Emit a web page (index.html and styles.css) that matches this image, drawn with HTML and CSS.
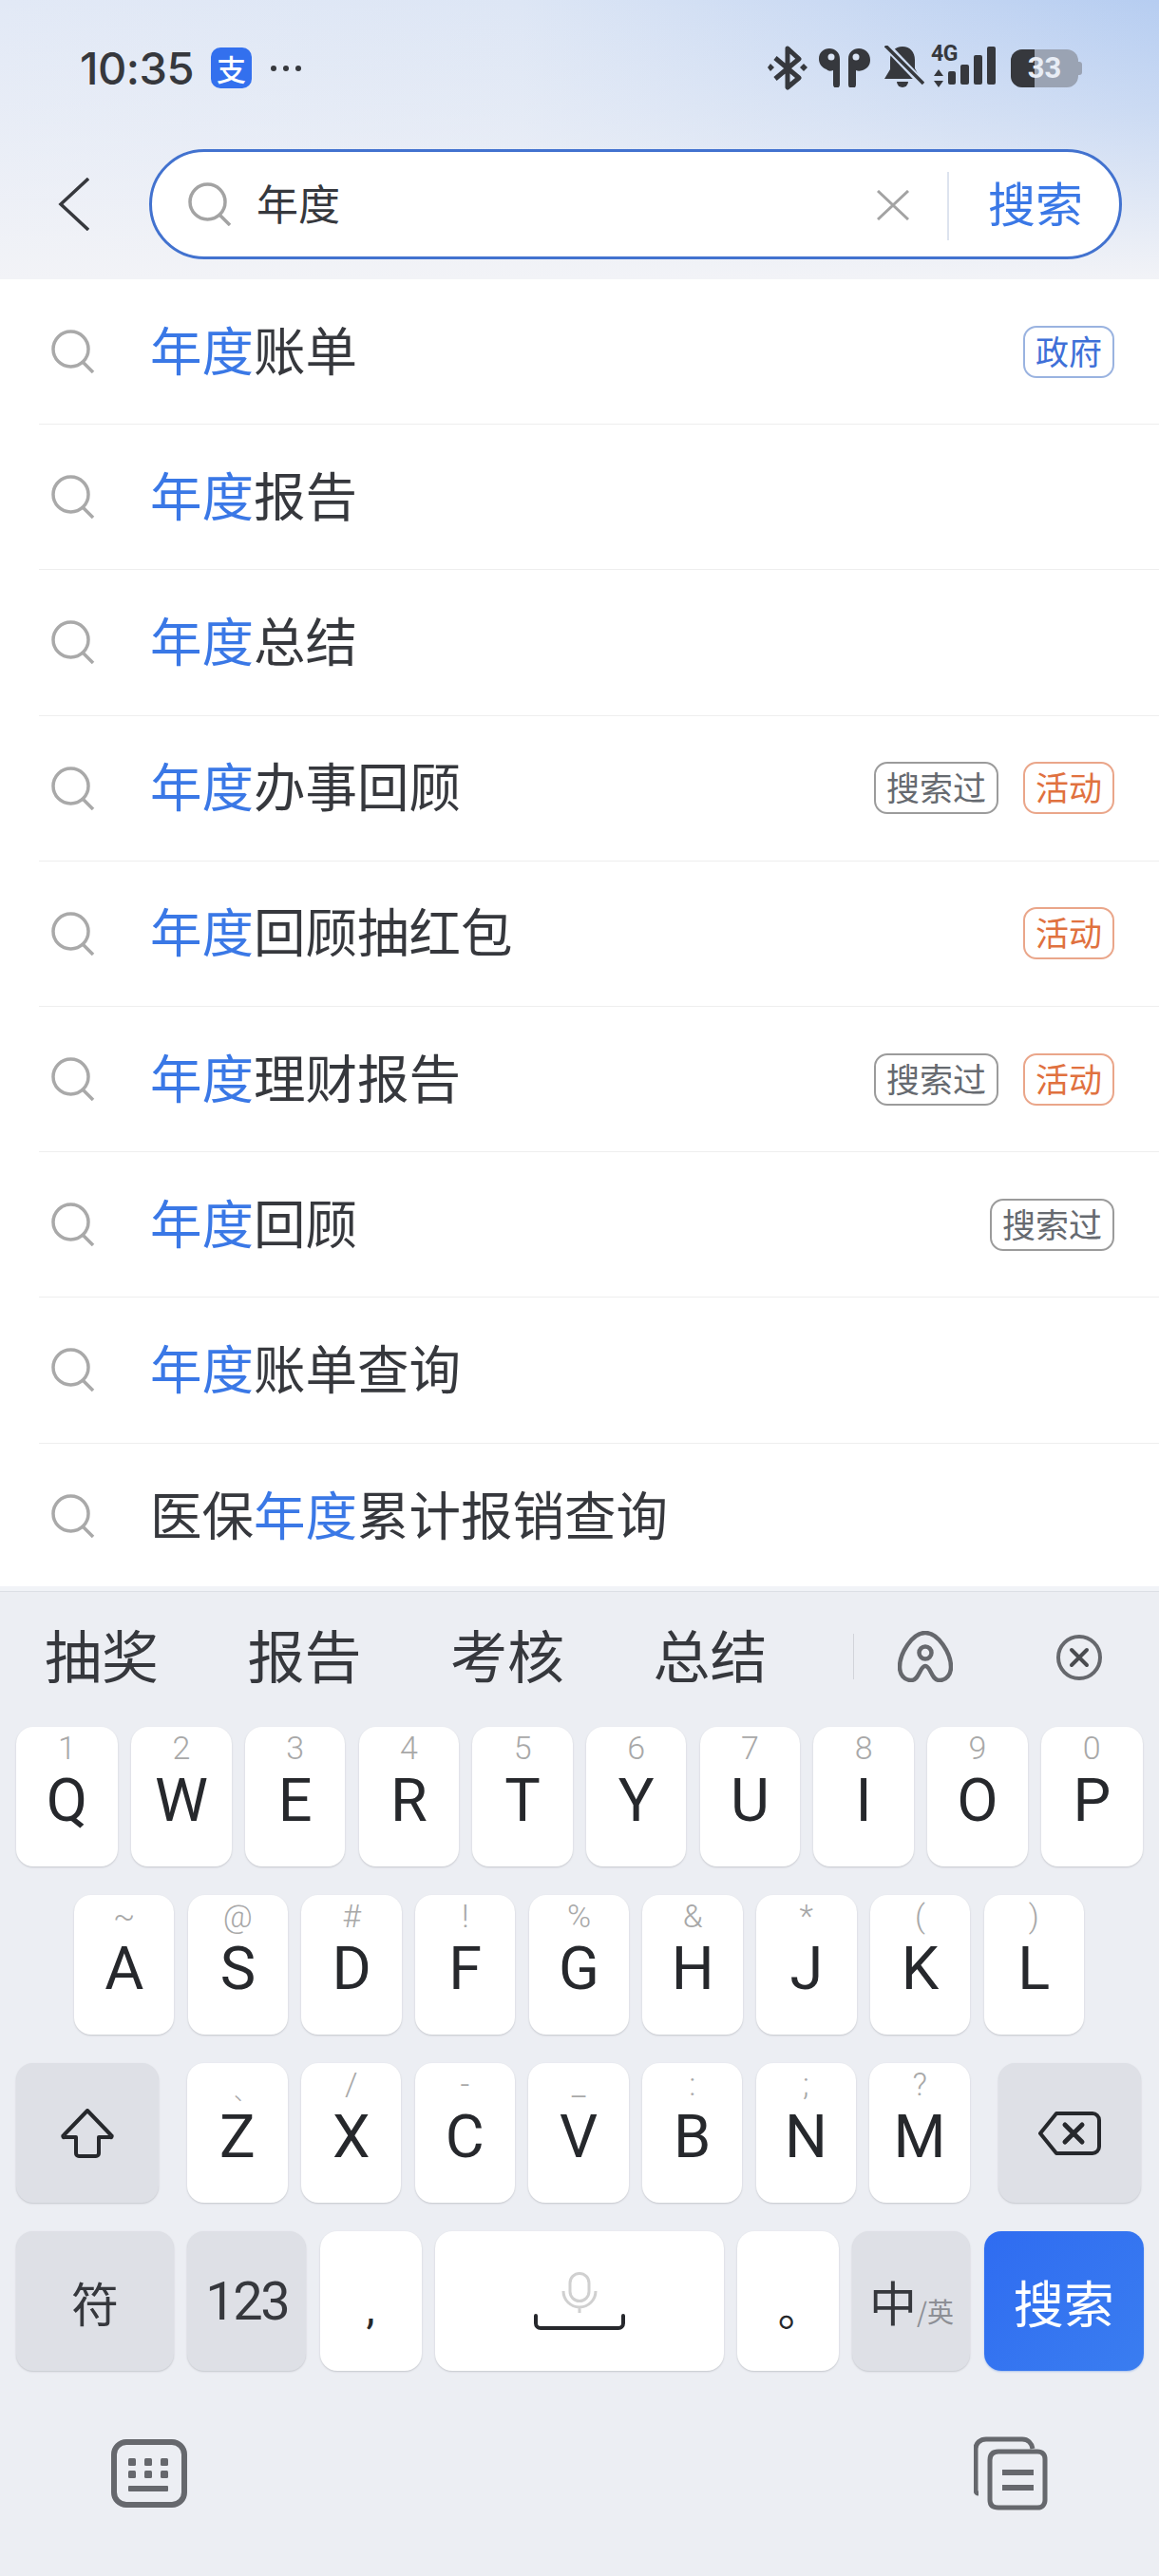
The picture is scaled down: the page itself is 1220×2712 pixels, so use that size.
FILE: index.html
```html
<!DOCTYPE html>
<html lang="zh">
<head>
<meta charset="utf-8">
<title>搜索</title>
<link rel="stylesheet" href="styles.css">
</head>
<body>
<svg class="defs" width="0" height="0" aria-hidden="true">
  <symbol id="mag" viewBox="0 0 46 46"><circle cx="20.5" cy="20.5" r="18.5" fill="none" stroke="currentColor" stroke-width="3.500"/><path d="M33 34l11 11" fill="none" stroke="currentColor" stroke-width="3.500"/></symbol>
</svg>
<div class="page">
  <header class="top">
    <div class="status">
      <div class="status-left">
        <span class="time">10:35</span>
        <span class="alipay">支</span>
        <span class="dots"><i></i><i></i><i></i></span>
      </div>
      <div class="status-right">
        <svg class="ic-bt" width="42" height="47" viewBox="0 0 42 47"><path d="M8 13l25 21-12 10V3l12 11L8 35" fill="none" stroke="#36383d" stroke-width="5" stroke-linejoin="round"/><path d="M3 19l4 4-4 4-3-4zM38 19l4 4-4 4-4-4z" fill="#36383d"/></svg>
        <svg class="ic-pods" width="54" height="41" viewBox="0 0 54 41"><g fill="#36383d"><path d="M11 0c6 0 11 4 11 11v27a3.500 3.500 0 0 1-7 0V23c-3 1-5 1-7-1C3 20 0 16 0 11 0 4 5 0 11 0z"/><path d="M42 0c7 0 12 5 12 12 0 6-3 9-8 11-3 1-5 1-7 0v15a4 4 0 0 1-8 0V11C31 4 36 0 42 0z"/></g><circle cx="13" cy="9" r="3.500" fill="#dbe5f5"/><circle cx="39" cy="9" r="3.500" fill="#dbe5f5"/></svg>
        <svg class="ic-bell" width="42" height="44" viewBox="0 0 42 44"><mask id="bm"><rect width="42" height="44" fill="#fff"/><path d="M0-2l42 44" stroke="#000" stroke-width="8"/></mask><g mask="url(#bm)" fill="#36383d"><path d="M19 1c8 0 13 6 13 14v9l6 11H0l6-10v-10C6 7 11 1 19 1z"/></g><path d="M13 38h12a6 6 0 0 1-12 0z" fill="#36383d"/><path d="M1 0l40 40" stroke="#36383d" stroke-width="3.500"/></svg>
        <div class="signal">
          <span class="net">4G</span>
          <svg width="68" height="43" viewBox="0 0 68 43"><g fill="#36383d"><path d="M8 24l5 7H3zM8 43l-5-7h10z"/><rect x="18" y="26" width="8" height="14" rx="2"/><rect x="31" y="19" width="9" height="21" rx="2"/><rect x="45" y="9" width="9" height="31" rx="2"/><rect x="59" y="0" width="9" height="40" rx="2"/></g></svg>
        </div>
        <div class="battery"><span class="batt-fill"></span><span class="batt-num">33</span><span class="batt-nub"></span></div>
      </div>
    </div>
    <div class="searchrow">
      <svg class="back" width="33" height="56" viewBox="0 0 33 56"><path d="M32 1L3 28l29 27" fill="none" stroke="#36383d" stroke-width="3.500"/></svg>
      <div class="searchbox">
        <svg class="sb-mag"><use href="#mag"/></svg>
        <span class="sb-text">年度</span>
        <svg class="sb-x" width="34" height="32" viewBox="0 0 34 32"><path d="M1 1l32 30M33 1L1 31" fill="none" stroke="#a3a3a3" stroke-width="3"/></svg>
        <span class="sb-div"></span>
        <span class="sb-btn">搜索</span>
      </div>
    </div>
  </header>

  <ul class="list">
    <li class="row"><svg class="r-mag"><use href="#mag"/></svg><span class="r-text"><em>年度</em>账单</span><span class="tag t-blue">政府</span></li>
    <li class="row"><svg class="r-mag"><use href="#mag"/></svg><span class="r-text"><em>年度</em>报告</span></li>
    <li class="row"><svg class="r-mag"><use href="#mag"/></svg><span class="r-text"><em>年度</em>总结</span></li>
    <li class="row"><svg class="r-mag"><use href="#mag"/></svg><span class="r-text"><em>年度</em>办事回顾</span><span class="tag t-gray">搜索过</span><span class="tag t-orange">活动</span></li>
    <li class="row"><svg class="r-mag"><use href="#mag"/></svg><span class="r-text"><em>年度</em>回顾抽红包</span><span class="tag t-orange">活动</span></li>
    <li class="row"><svg class="r-mag"><use href="#mag"/></svg><span class="r-text"><em>年度</em>理财报告</span><span class="tag t-gray">搜索过</span><span class="tag t-orange">活动</span></li>
    <li class="row"><svg class="r-mag"><use href="#mag"/></svg><span class="r-text"><em>年度</em>回顾</span><span class="tag t-gray">搜索过</span></li>
    <li class="row"><svg class="r-mag"><use href="#mag"/></svg><span class="r-text"><em>年度</em>账单查询</span></li>
    <li class="row"><svg class="r-mag"><use href="#mag"/></svg><span class="r-text">医保<em>年度</em>累计报销查询</span></li>
  </ul>

  <section class="kb">
    <div class="cands">
      <span class="cand c1">抽奖</span>
      <span class="cand c2">报告</span>
      <span class="cand c3">考核</span>
      <span class="cand c4">总结</span>
      <span class="cand-div"></span>
      <svg class="ic-a" width="58" height="54" viewBox="0 0 58 54"><g fill="none" stroke="#66686d" stroke-width="4.500"><path d="M29 2C15 2 2 24 2 38c0 8 5 14 12 14 9 0 9-15 15-15s6 15 15 15c7 0 12-6 12-14C56 24 43 2 29 2z"/><circle cx="29" cy="23" r="6.500"/></g></svg>
      <svg class="ic-c" width="48" height="48" viewBox="0 0 48 48"><circle cx="24" cy="24" r="22" fill="none" stroke="#66686d" stroke-width="4"/><path d="M16 16l16 16M32 16L16 32" stroke="#4a4c50" stroke-width="4" stroke-linecap="round"/></svg>
    </div>
    <div class="krow">
      <div class="key k-q"><span class="hint">1</span><span class="ltr">Q</span></div>
      <div class="key"><span class="hint">2</span><span class="ltr">W</span></div>
      <div class="key"><span class="hint">3</span><span class="ltr">E</span></div>
      <div class="key"><span class="hint">4</span><span class="ltr">R</span></div>
      <div class="key"><span class="hint">5</span><span class="ltr">T</span></div>
      <div class="key"><span class="hint">6</span><span class="ltr">Y</span></div>
      <div class="key"><span class="hint">7</span><span class="ltr">U</span></div>
      <div class="key"><span class="hint">8</span><span class="ltr">I</span></div>
      <div class="key"><span class="hint">9</span><span class="ltr">O</span></div>
      <div class="key k-q"><span class="hint">0</span><span class="ltr">P</span></div>
    </div>
    <div class="krow r2">
      <div class="key"><span class="hint">~</span><span class="ltr">A</span></div>
      <div class="key"><span class="hint">@</span><span class="ltr">S</span></div>
      <div class="key"><span class="hint">#</span><span class="ltr">D</span></div>
      <div class="key"><span class="hint">!</span><span class="ltr">F</span></div>
      <div class="key"><span class="hint">%</span><span class="ltr">G</span></div>
      <div class="key"><span class="hint">&amp;</span><span class="ltr">H</span></div>
      <div class="key"><span class="hint">*</span><span class="ltr">J</span></div>
      <div class="key"><span class="hint">(</span><span class="ltr">K</span></div>
      <div class="key"><span class="hint">)</span><span class="ltr">L</span></div>
    </div>
    <div class="krow r3">
      <div class="key fn k-wide"><svg width="56" height="52" viewBox="0 0 56 52"><path d="M28 2L3 28a1 1 0 0 0 1 2h12v17a3 3 0 0 0 3 3h18a3 3 0 0 0 3-3V30h12a1 1 0 0 0 1-2z" fill="none" stroke="#26282c" stroke-width="4" stroke-linejoin="round"/></svg></div>
      <div class="key sp"><span class="hint h-tick">、</span><span class="ltr l-tick">Z</span></div>
      <div class="key"><span class="hint">/</span><span class="ltr">X</span></div>
      <div class="key"><span class="hint">-</span><span class="ltr">C</span></div>
      <div class="key"><span class="hint">_</span><span class="ltr">V</span></div>
      <div class="key"><span class="hint">:</span><span class="ltr">B</span></div>
      <div class="key"><span class="hint">;</span><span class="ltr">N</span></div>
      <div class="key"><span class="hint">?</span><span class="ltr">M</span></div>
      <div class="key fn k-wide sp"><svg width="66" height="46" viewBox="0 0 66 46"><path d="M19 2h38a7 7 0 0 1 7 7v28a7 7 0 0 1-7 7H19L2 23z" fill="none" stroke="#26282c" stroke-width="4" stroke-linejoin="round"/><path d="M28 14l18 18M46 14L28 32" stroke="#26282c" stroke-width="5" stroke-linecap="round"/></svg></div>
    </div>
    <div class="krow r4">
      <div class="key fn k-sym"><span class="kf">符</span></div>
      <div class="key fn k-123"><span class="knum">123</span></div>
      <div class="key k-pun"><span class="comma">,</span></div>
      <div class="key k-space"><svg width="96" height="62" viewBox="0 0 96 62"><g fill="none" stroke="#d0d0d0" stroke-width="3"><rect x="38" y="1.500" width="20" height="29" rx="10"/><path d="M31 20a17 17 0 0 0 34 0M48 37v6"/></g><path d="M2 46v8a5 5 0 0 0 5 5h82a5 5 0 0 0 5-5v-8" fill="none" stroke="#26282c" stroke-width="4" stroke-linecap="round"/></svg></div>
      <div class="key k-pun"><span class="period">。</span></div>
      <div class="key fn k-lang"><span class="kf">中</span><span class="sub">/英</span></div>
      <div class="key k-go">搜索</div>
    </div>
    <div class="tools">
      <svg width="80" height="72" viewBox="0 0 80 72"><rect x="3" y="3" width="74" height="66" rx="13" fill="none" stroke="#66686d" stroke-width="6"/><g fill="#66686d"><rect x="18" y="20" width="8" height="8" rx="1.500"/><rect x="35" y="20" width="8" height="8" rx="1.500"/><rect x="52" y="20" width="8" height="8" rx="1.500"/><rect x="18" y="33" width="8" height="8" rx="1.500"/><rect x="35" y="33" width="8" height="8" rx="1.500"/><rect x="52" y="33" width="8" height="8" rx="1.500"/><rect x="18" y="49" width="42" height="6" rx="1"/></g></svg>
      <svg width="78" height="78" viewBox="0 0 78 78"><path d="M5 60a3 3 0 0 1-3-3V13C2 7 7 3 13 3h38c6 0 10 4 11 10" fill="none" stroke="#66686d" stroke-width="5"/><path d="M17 25c0-6 3-9 9-9h41c5 0 8 3 8 8v43c0 5-3 8-8 8H26c-6 0-9-3-9-8z" fill="none" stroke="#66686d" stroke-width="5"/><path d="M30 38h33M30 54h33" stroke="#66686d" stroke-width="6"/></svg>
    </div>
  </section>
</div>
</body>
</html>
```

FILE: styles.css
```css
* { box-sizing: border-box; }
html, body { margin: 0; padding: 0; }
body {
  width: 1220px;
  height: 2712px;
  overflow: hidden;
  background: #eceef3;
  font-family: "Noto Sans CJK SC", "Noto Sans", sans-serif;
  color: #36383d;
}
.defs { position: absolute; }
.page { display: flex; flex-direction: column; width: 1220px; height: 2712px; overflow: hidden; }

/* header */
.top {
  height: 294px;
  background:
    linear-gradient(to bottom, rgba(242,243,247,0) 0, rgba(242,243,247,.35) 40%, #f2f3f7 100%),
    linear-gradient(to right, #e2e9f6 0, #dde6f5 45%, #b6cdf1 100%);
}
.status {
  height: 157px;
  padding: 48px 85px 0 84px;
  display: flex;
  justify-content: space-between;
  align-items: flex-start;
}
.status-left { display: flex; align-items: center; height: 47px; margin-top: 0; }
.time {
  font-family: Inter, Roboto, sans-serif;
  font-weight: 500;
  font-size: 47px;
  letter-spacing: -.5px;
  line-height: 47px;
  width: 118px;
  white-space: nowrap;
  color: #36383d;
}
.alipay {
  width: 43px; height: 43px;
  margin-left: 20px;
  border-radius: 10px;
  background: #3370ee;
  color: #fff;
  font-size: 31px;
  font-weight: 500;
  line-height: 43px;
  text-align: center;
}
.dots { display: flex; gap: 7px; margin-left: 20px; }
.dots i { width: 6px; height: 6px; border-radius: 50%; background: #36383d; }
.status-right { display: flex; align-items: flex-start; }
.ic-bt { margin-right: 12px; }
.ic-pods { margin-top: 3px; margin-right: 15px; }
.ic-bell { margin-right: 7px; }
.signal { position: relative; width: 68px; height: 44px; margin-right: 16px; padding-top: 1px; }
.net {
  position: absolute;
  left: 0; top: -3px;
  font-family: Roboto, sans-serif;
  font-weight: 700;
  font-size: 23px;
  line-height: 23px;
  letter-spacing: -.5px;
}
.battery {
  position: relative;
  width: 71px; height: 40px;
  margin-top: 4px;
  border-radius: 12px;
  background: #9aa3b3;
  display: flex;
  align-items: center;
  justify-content: center;
}
.batt-fill { position: absolute; left: 0; top: 0; bottom: 0; width: 25px; background: #36383d; border-radius: 12px 0 0 12px; }
.batt-nub { position: absolute; right: -4px; top: 13px; width: 4px; height: 14px; background: #9aa3b3; border-radius: 0 3px 3px 0; }
.batt-num {
  position: relative;
  font-family: Roboto, sans-serif;
  font-weight: 700;
  font-size: 31px;
  line-height: 40px;
  color: #e8edf5;
}

.searchrow { display: flex; align-items: center; padding-left: 61px; height: 116px; }
.back { margin-right: 63px; flex: none; }
.searchbox {
  width: 1024px;
  height: 116px;
  border: 3.500px solid #4272cf;
  border-radius: 58px;
  background: #fff;
  display: flex;
  align-items: center;
  padding-left: 38px;
}
.sb-mag { width: 46px; height: 46px; color: #a3a3a3; flex: none; }
.sb-text { font-size: 44px; line-height: 60px; margin-left: 26px; width: 653px; padding-bottom: 4px; color: #36383d; }
.sb-x { flex: none; margin-top: 2px; }
.sb-div { width: 2px; height: 72px; background: #dde3ef; margin-left: 40px; margin-top: 4px; }
.sb-btn { font-size: 50px; line-height: 60px; color: #3a78e6; margin-left: 41px; padding-bottom: 6px; }

/* list */
.list { list-style: none; margin: 0; padding: 0 0 0 41px; background: #fff; height: 1376px; }
.row {
  display: flex;
  align-items: center;
  height: 153.200px;
  padding-right: 47px;
  border-bottom: 1.500px solid #eeeeee;
}
.row:last-child { border-bottom: 0; }
.r-mag { width: 46px; height: 46px; color: #a9a9a9; margin-left: 13px; flex: none; }
.r-text { font-size: 54.500px; line-height: 70px; margin-left: 58px; padding-bottom: 7px; flex: 1; color: #36383d; }
.r-text em { font-style: normal; color: #3a78e6; }
.tag {
  height: 55px;
  padding: 0 11px;
  border-width: 2px;
  border-style: solid;
  border-radius: 14px;
  font-size: 35px;
  line-height: 48px;
  margin-left: 26px;
  flex: none;
}
.t-blue { border-color: #9ab3e0; color: #3f70d8; }
.t-gray { border-color: #9b9b9b; color: #666a70; }
.t-orange { border-color: #eaa68a; color: #e0713f; }

/* keyboard */
.kb {
  flex: 1;
  background: #eceef3;
  border-top: 5px solid #f1f3f7;
  box-shadow: inset 0 1px 0 #dcdfe5;
}
.cands { position: relative; height: 143px; display: flex; align-items: flex-start; }
.cand { font-size: 60px; line-height: 60px; margin-top: 36px; color: #36383d; flex: none; }
.c1 { margin-left: 47px; }
.c2 { margin-left: 93.500px; }
.c3 { margin-left: 93.500px; }
.c4 { margin-left: 93.500px; }
.cand-div { width: 1px; height: 48px; background: #d2d4da; margin-left: 90px; margin-top: 45px; flex: none; }
.ic-a { margin-left: 46px; margin-top: 42px; flex: none; }
.ic-c { margin-left: 109px; margin-top: 46px; flex: none; }

.krow { display: flex; gap: 14.300px; padding-left: 17px; margin-bottom: 30px; height: 147px; }
.krow.r2 { padding-left: 78px; }
.key {
  width: 105.400px;
  height: 147px;
  border-radius: 18px;
  background: #fff;
  box-shadow: 0 1px 2px #c4c6cc;
  display: flex;
  flex-direction: column;
  align-items: center;
  flex: none;
}
.k-q { width: 107px; }
.hint {
  font-family: Roboto, sans-serif;
  font-weight: 300;
  font-size: 34px;
  line-height: 34px;
  height: 34px;
  margin-top: 5px;
  color: #a8a8a8;
}
.h-tick {
  font-family: "Noto Sans CJK SC", sans-serif;
  font-size: 24px;
  line-height: 24px;
  height: 24px;
  margin-top: 17px;
  padding-left: 16px;
}
.ltr {
  font-family: Roboto, sans-serif;
  font-weight: 400;
  font-size: 63px;
  line-height: 70px;
  margin-top: 4px;
  color: #26282c;
}
.l-tick { margin-top: 2px; }
.fn { background: #dee0e6; justify-content: center; align-items: center; }
.fn, .k-space, .k-pun, .k-go { flex-direction: row; justify-content: center; align-items: center; }
.k-wide { width: 150px; }
.sp { margin-left: 16px; }
.k-sym { width: 166px; }
.k-123 { width: 125px; }
.k-pun { width: 107px; }
.k-space { width: 304px; }
.k-lang { width: 124px; align-items: flex-end; padding-bottom: 44px; }
.k-go {
  width: 168px;
  background: linear-gradient(135deg, #2f6cf1, #3a7df0);
  color: #fff;
  font-size: 53px;
  box-shadow: 0 1px 2px #a9c0ea;
}
.kf { font-size: 50px; line-height: 60px; color: #36383d; }
.knum { font-family: Roboto, sans-serif; font-weight: 400; font-size: 56px; letter-spacing: -2.500px; color: #36383d; }
.comma { font-family: Roboto, sans-serif; font-size: 46px; line-height: 50px; margin-top: 14px; color: #26282c; }
.period { font-size: 46px; line-height: 50px; margin-top: 10px; padding-left: 24px; color: #26282c; }
.sub { font-size: 28px; line-height: 38px; color: #8d8f95; }
.tools { display: flex; justify-content: space-between; padding: 42px 117px 0 117px; align-items: center; height: 114px; }
```
